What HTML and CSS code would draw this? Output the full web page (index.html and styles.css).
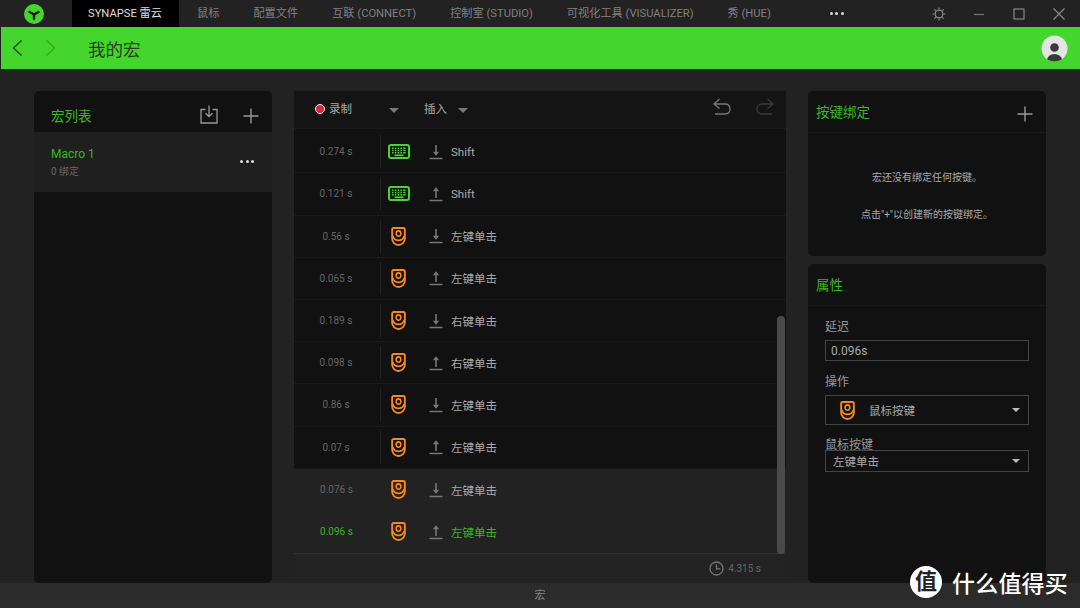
FILE: index.html
```html
<!DOCTYPE html>
<html lang="zh-CN">
<head>
    <meta charset="UTF-8">
    <title>我的宏</title>
    <link rel="stylesheet" href="styles.css">
</head>
<body>

<svg class="defs" width="0" height="0">
    <symbol id="keyboard" viewBox="0 0 22 15">
        <rect x="1" y="1" width="20" height="13" rx="2" fill="none" stroke="#44d62c" stroke-width="2"/>
        <path d="M4 4.200h1.600M6.800 4.200h1.600M9.600 4.200h1.600M12.400 4.200h1.600M15.200 4.200h2.400M4 6.500h1.600M6.800 6.500h1.600M9.600 6.500h1.600M12.400 6.500h1.600M15.200 6.500h2.400M4 8.800h1.600M6.800 8.800h1.600M9.600 8.800h1.600M12.400 8.800h1.600M15.200 8.800h2.400" stroke="#44d62c" stroke-width="1.400" fill="none"/>
        <path d="M6.500 11.300h9" stroke="#44d62c" stroke-width="1.700"/>
    </symbol>
    <symbol id="mouse" viewBox="0 0 14 18">
        <path d="M2.500 1h9c.9 0 1.500.6 1.500 1.500v8.500c0 3.500-2.700 6-6 6s-6-2.500-6-6v-8.500c0-.9.600-1.500 1.500-1.500z" fill="none" stroke="#f7891e" stroke-width="1.800"/>
        <path d="M1.500 8.500c1 2.800 3 4.200 5.500 4.200s4.500-1.400 5.500-4.200" fill="none" stroke="#f7891e" stroke-width="1.700"/>
        <rect x="4.800" y="3.700" width="4.400" height="5" rx="2.200" fill="none" stroke="#f7891e" stroke-width="1.500"/>
    </symbol>
    <symbol id="down" viewBox="0 0 14 16">
        <path d="M7 1v10" fill="none" stroke="#777" stroke-width="1.600"/>
        <path d="M3.800 7.800h6.400L7 11.800z" fill="#777"/>
        <path d="M.5 14.500h13" fill="none" stroke="#777" stroke-width="1.500"/>
    </symbol>
    <symbol id="up" viewBox="0 0 14 16">
        <path d="M7 12V3" fill="none" stroke="#777" stroke-width="1.600"/>
        <path d="M3.800 5.200h6.400L7 1.200z" fill="#777"/>
        <path d="M.5 14.500h13" fill="none" stroke="#777" stroke-width="1.500"/>
    </symbol>
    <symbol id="plus" viewBox="0 0 16 16">
        <path d="M8 .5v15M.5 8h15" fill="none" stroke="#999" stroke-width="1.400"/>
    </symbol>
</svg>

<header class="titlebar">
    <div class="logo">
        <svg width="20" height="20" viewBox="0 0 20 20">
            <circle cx="10" cy="10" r="10" fill="#44d62c"/>
            <path d="M10 10.500 5.500 8M10 10.500 14.500 8M10 10.500V15" stroke="#111" stroke-width="2.400" fill="none" stroke-linecap="round"/>
        </svg>
    </div>
    <nav class="tabs">
        <a class="tab active">SYNAPSE 雷云</a>
        <a class="tab">鼠标</a>
        <a class="tab">配置文件</a>
        <a class="tab">互联 (CONNECT)</a>
        <a class="tab">控制室 (STUDIO)</a>
        <a class="tab">可视化工具 (VISUALIZER)</a>
        <a class="tab">秀 (HUE)</a>
    </nav>
    <div class="more more-top"><i></i><i></i><i></i></div>
    <div class="window-btns">
        <svg width="14" height="14" viewBox="0 0 14 14"><circle cx="7" cy="7" r="3.800" fill="none" stroke="#888" stroke-width="1.300"/><path d="M7 .5v2M7 11.500v2M.5 7h2M11.500 7h2M2.400 2.400l1.400 1.400M10.200 10.200l1.400 1.400M2.400 11.600l1.400-1.400M10.200 3.800l1.400-1.400" stroke="#888" stroke-width="1.200"/></svg>
        <svg width="14" height="14" viewBox="0 0 14 14"><path d="M2 7.500h10" stroke="#777" stroke-width="1.200"/></svg>
        <svg width="14" height="14" viewBox="0 0 14 14"><rect x="2" y="2" width="10" height="10" fill="none" stroke="#888" stroke-width="1.200"/></svg>
        <svg width="14" height="14" viewBox="0 0 14 14"><path d="M1.500 1.500l11 11M12.500 1.500l-11 11" stroke="#888" stroke-width="1.200"/></svg>
    </div>
</header>

<div class="greenbar">
    <svg class="nav-arrow" width="12" height="16" viewBox="0 0 12 16"><path d="M9.500.5 1.500 8l8 7.500" fill="none" stroke="#1c3d17" stroke-width="1.300"/></svg>
    <svg class="nav-arrow" width="12" height="16" viewBox="0 0 12 16"><path d="M1.500.5l8 7.500-8 7.500" fill="none" stroke="#35a524" stroke-width="1.300"/></svg>
    <h1>我的宏</h1>
    <svg class="avatar" width="27" height="27" viewBox="0 0 27 27">
        <defs><clipPath id="avatarClip"><circle cx="13.500" cy="13.500" r="13"/></clipPath></defs>
        <circle cx="13.500" cy="13.500" r="13" fill="#e4e4e4"/>
        <g clip-path="url(#avatarClip)" fill="#3a3a3a">
            <circle cx="13.500" cy="12.500" r="4.300"/>
            <ellipse cx="13.500" cy="25" rx="7.500" ry="6"/>
        </g>
    </svg>
</div>

<main class="content">
    <section class="card card-list">
        <div class="card-head">
            <h2>宏列表</h2>
            <svg class="head-import" width="18" height="19" viewBox="0 0 18 19"><path d="M5.500 4.500H1v13.500h16V4.500h-4.500M9 .5v11M5.500 8.200 9 11.700l3.500-3.500" fill="none" stroke="#999" stroke-width="1.300"/></svg>
            <svg class="head-plus" width="16" height="16"><use href="#plus"/></svg>
        </div>
        <div class="macro">
            <div>
                <div class="macro-name">Macro 1</div>
                <div class="macro-sub">0 绑定</div>
            </div>
            <div class="more"><i></i><i></i><i></i></div>
        </div>
    </section>

    <section class="card card-editor">
        <div class="toolbar">
            <span class="rec"></span>
            <span class="tool-label">录制</span>
            <span class="caret caret-rec"></span>
            <span class="tool-label tool-insert">插入</span>
            <span class="caret caret-insert"></span>
            <svg class="undo" width="20" height="19" viewBox="0 0 20 19"><path d="M7.500 1 2 6l5.500 4.500M2 6h11c3 0 5 2 5 5s-2 5-5 5H3" fill="none" stroke="#777" stroke-width="1.300"/></svg>
            <svg class="redo" width="20" height="19" viewBox="0 0 20 19"><path d="M12.500 1 18 6l-5.500 4.500M18 6H7c-3 0-5 2-5 5s2 5 5 5h10" fill="none" stroke="#3a3a3a" stroke-width="1.300"/></svg>
        </div>
        <div class="rows">
            <div class="row"><span class="time">0.274 s</span><svg class="dev" width="22" height="15"><use href="#keyboard"/></svg><svg class="dir" width="14" height="16"><use href="#down"/></svg><span class="label">Shift</span></div>
            <div class="row"><span class="time">0.121 s</span><svg class="dev" width="22" height="15"><use href="#keyboard"/></svg><svg class="dir" width="14" height="16"><use href="#up"/></svg><span class="label">Shift</span></div>
            <div class="row"><span class="time">0.56 s</span><svg class="dev dev-mouse" width="15" height="19"><use href="#mouse"/></svg><svg class="dir" width="14" height="16"><use href="#down"/></svg><span class="label">左键单击</span></div>
            <div class="row"><span class="time">0.065 s</span><svg class="dev dev-mouse" width="15" height="19"><use href="#mouse"/></svg><svg class="dir" width="14" height="16"><use href="#up"/></svg><span class="label">左键单击</span></div>
            <div class="row"><span class="time">0.189 s</span><svg class="dev dev-mouse" width="15" height="19"><use href="#mouse"/></svg><svg class="dir" width="14" height="16"><use href="#down"/></svg><span class="label">右键单击</span></div>
            <div class="row"><span class="time">0.098 s</span><svg class="dev dev-mouse" width="15" height="19"><use href="#mouse"/></svg><svg class="dir" width="14" height="16"><use href="#up"/></svg><span class="label">右键单击</span></div>
            <div class="row"><span class="time">0.86 s</span><svg class="dev dev-mouse" width="15" height="19"><use href="#mouse"/></svg><svg class="dir" width="14" height="16"><use href="#down"/></svg><span class="label">左键单击</span></div>
            <div class="row"><span class="time">0.07 s</span><svg class="dev dev-mouse" width="15" height="19"><use href="#mouse"/></svg><svg class="dir" width="14" height="16"><use href="#up"/></svg><span class="label">左键单击</span></div>
            <div class="row row-sel"><span class="time">0.076 s</span><svg class="dev dev-mouse" width="15" height="19"><use href="#mouse"/></svg><svg class="dir" width="14" height="16"><use href="#down"/></svg><span class="label">左键单击</span></div>
            <div class="row row-sel row-current"><span class="time">0.096 s</span><svg class="dev dev-mouse" width="15" height="19"><use href="#mouse"/></svg><svg class="dir" width="14" height="16"><use href="#up"/></svg><span class="label">左键单击</span></div>
            <div class="scrollbar"></div>
        </div>
        <div class="total">
            <svg width="15" height="15" viewBox="0 0 15 15"><circle cx="7.500" cy="7.500" r="6.500" fill="none" stroke="#777" stroke-width="1.300"/><path d="M7.500 3.500v4.300h3.800" fill="none" stroke="#777" stroke-width="1.300"/></svg>
            <span>4.315 s</span>
        </div>
    </section>

    <div class="side">
        <section class="card card-bind">
            <div class="card-head card-head-side">
                <h2>按键绑定</h2>
                <svg class="head-plus" width="16" height="16"><use href="#plus"/></svg>
            </div>
            <div class="bind-msg">
                <p>宏还没有绑定任何按键。</p>
                <p>点击"+"以创建新的按键绑定。</p>
            </div>
        </section>
        <section class="card card-props">
            <div class="card-head card-head-side card-head-props">
                <h2>属性</h2>
            </div>
            <form class="props">
                <label>延迟</label>
                <div class="field field-delay">0.096s</div>
                <label>操作</label>
                <div class="field field-action">
                    <svg width="15" height="19"><use href="#mouse"/></svg>
                    <span>鼠标按键</span>
                    <span class="caret caret-small"></span>
                </div>
                <label class="label-tight">鼠标按键</label>
                <div class="field field-button">
                    <span>左键单击</span>
                    <span class="caret caret-small"></span>
                </div>
            </form>
        </section>
    </div>
</main>

<footer class="footer">宏</footer>

<div class="watermark">
    <span class="wm-badge">值</span>
    <span class="wm-text">什么值得买</span>
</div>

</body>
</html>
```

FILE: styles.css
```css
* {
    box-sizing: border-box;
}

body {
    margin: 0;
    width: 1080px;
    height: 608px;
    overflow: hidden;
    position: relative;
    display: flex;
    flex-direction: column;
    background-color: #222;
    color: #aaa;
    font-family: 'Roboto', 'Noto Sans CJK SC', sans-serif;
    font-size: 11px;
}

.defs {
    position: absolute;
}

h1, h2, p {
    margin: 0;
    font-weight: normal;
}

.titlebar {
    height: 27px;
    flex: none;
    display: flex;
    align-items: center;
    background-color: #222;
}

.logo {
    width: 72px;
    padding-left: 24px;
    display: flex;
}

.tabs {
    display: flex;
    height: 27px;
}

.tab {
    padding: 0 16px 0 18px;
    line-height: 27px;
    font-size: 11.200px;
    color: #808080;
    white-space: nowrap;
}

.tab.active {
    background-color: #000;
    color: #ddd;
    width: 107px;
    padding-left: 16px;
}

.more {
    display: flex;
    gap: 2.500px;
}

.more i {
    width: 3px;
    height: 3px;
    border-radius: 50%;
    background-color: #ddd;
}

.more-top {
    margin-left: 43px;
}

.window-btns {
    margin-left: auto;
    display: flex;
    gap: 26px;
    padding-right: 14px;
}

.greenbar {
    height: 42px;
    flex: none;
    display: flex;
    align-items: center;
    margin-left: 1px;
    padding: 0 12px 0 11px;
    background-color: #44d62c;
}

.nav-arrow + .nav-arrow {
    margin-left: 21px;
}

.greenbar h1 {
    margin-left: 31px;
    font-size: 17.500px;
    color: #24421e;
}

.avatar {
    margin-left: auto;
}

.content {
    flex: 1;
    display: flex;
    gap: 22px;
    padding: 22px 34px 0;
    min-height: 0;
}

.card {
    background-color: #111;
    border-radius: 5px;
    display: flex;
    flex-direction: column;
}

.card-list {
    width: 238px;
}

.card-head {
    height: 41px;
    flex: none;
    display: flex;
    align-items: center;
    padding: 7px 13px 0 17px;
}

.card-head h2 {
    font-size: 13.500px;
    color: #3cb526;
    margin-right: auto;
}

.head-import {
    margin-top: -2px;
}

.head-plus {
    margin-left: 25px;
    margin-top: 2px;
}

.macro {
    height: 60px;
    display: flex;
    align-items: center;
    justify-content: space-between;
    padding: 0 18px 0 17px;
    background-color: #1f1f1f;
}

.macro-name {
    font-size: 12px;
    color: #3cb526;
    margin-top: 1px;
    margin-bottom: 2px;
}

.macro-sub {
    font-size: 10px;
    color: #666;
}

.macro .more {
    margin-top: -2px;
}

.card-editor {
    width: 492px;
    border-radius: 0;
}

.toolbar {
    height: 38px;
    flex: none;
    display: flex;
    align-items: center;
    padding: 0 11px 3px 21px;
    border-bottom: 1px solid #1a1a1a;
    background-color: #141414;
}

.rec {
    width: 10px;
    height: 10px;
    border-radius: 50%;
    background-color: #d8263c;
    border: 1.500px solid #eee;
    margin-right: 4px;
    margin-top: 2px;
}

.tool-label {
    color: #aaa;
    font-size: 11.500px;
}

.tool-insert {
    margin-right: 11px;
}

.caret {
    width: 0;
    height: 0;
    border-left: 5px solid transparent;
    border-right: 5px solid transparent;
    border-top: 5px solid #777;
}

.caret-rec {
    margin: 4px 25px 0 37px;
}

.caret-insert {
    margin-top: 4px;
}

.undo {
    margin-left: auto;
    margin-top: -1px;
}

.redo {
    margin-left: 23px;
    margin-top: -1px;
}

.rows {
    flex: 1;
    position: relative;
    min-height: 0;
    padding-top: 2.200px;
}

.row {
    height: 42.200px;
    display: flex;
    align-items: center;
    border-bottom: 1px solid #191919;
}

.time {
    width: 87px;
    height: 33px;
    line-height: 33px;
    padding-right: 2px;
    text-align: center;
    font-size: 10px;
    color: #666;
    border-right: 1px solid #222;
}

.dev {
    flex: none;
    margin-left: 7px;
    margin-right: 0;
}

.dev-mouse {
    margin-left: 10px;
    margin-right: 4px;
}

.dir {
    flex: none;
    margin-left: 19px;
}

.label {
    margin-left: 8px;
    font-size: 11.500px;
    color: #aaa;
}

.row-sel {
    background-color: #222;
    border-bottom: none;
}

.row-sel .time {
    border-right: none;
}

.row-current .time,
.row-current .label {
    color: #3cb526;
}

.scrollbar {
    position: absolute;
    top: 187px;
    right: 1px;
    width: 8px;
    height: 238px;
    border-radius: 4px;
    background-color: #4a4a4a;
}

.total {
    height: 30px;
    flex: none;
    display: flex;
    align-items: center;
    justify-content: flex-end;
    gap: 4px;
    padding-right: 25px;
    font-size: 10px;
    color: #666;
    background-color: #232323;
    border-top: 1px solid #333;
}

.side {
    width: 238px;
    display: flex;
    flex-direction: column;
    gap: 8px;
}

.card-bind {
    height: 165px;
    flex: none;
}

.card-head-side {
    height: 42px;
    padding: 0 13px 2px 8px;
    border-bottom: 1px solid #191919;
}

.card-head-side .head-plus {
    margin-top: 6px;
}

.card-head-props {
    padding-right: 0;
}

.bind-msg {
    padding-top: 36px;
    text-align: center;
    font-size: 10px;
    color: #aaa;
}

.bind-msg p + p {
    margin-top: 22px;
}

.card-props {
    flex: 1;
}

.props {
    display: flex;
    flex-direction: column;
    padding: 12px 17px;
}

.props label {
    font-size: 12px;
    color: #999;
    line-height: 18px;
    margin-bottom: 4px;
}

.props .label-tight {
    margin-top: 1px;
    margin-bottom: -4px;
}

.field {
    border: 1px solid #444;
    display: flex;
    align-items: center;
    color: #aaa;
    font-size: 12px;
    margin-bottom: 10px;
}

.field-delay {
    height: 21px;
    padding-left: 5px;
    margin-bottom: 12px;
}

.field-action {
    height: 30px;
    padding: 0 8px 0 14px;
    font-size: 11.500px;
    gap: 14px;
}

.field-button {
    height: 22px;
    padding: 0 8px 0 7px;
    font-size: 11.500px;
}

.caret-small {
    margin-left: auto;
    border-left-width: 4px;
    border-right-width: 4px;
    border-top: 4px solid #bbb;
}

.footer {
    height: 25px;
    flex: none;
    text-align: center;
    line-height: 25px;
    font-size: 11px;
    color: #888;
    background-color: #2b2b2b;
}

.watermark {
    position: absolute;
    left: 910px;
    top: 565px;
    display: flex;
    align-items: center;
    gap: 10px;
}

.wm-badge {
    width: 32px;
    height: 32px;
    border-radius: 50%;
    background-color: #fff;
    color: #222;
    font-size: 22px;
    line-height: 31px;
    text-align: center;
    font-weight: 700;
}

.wm-text {
    font-size: 23px;
    font-weight: 500;
    color: #fff;
    white-space: nowrap;
    letter-spacing: 0.200px;
}
```
